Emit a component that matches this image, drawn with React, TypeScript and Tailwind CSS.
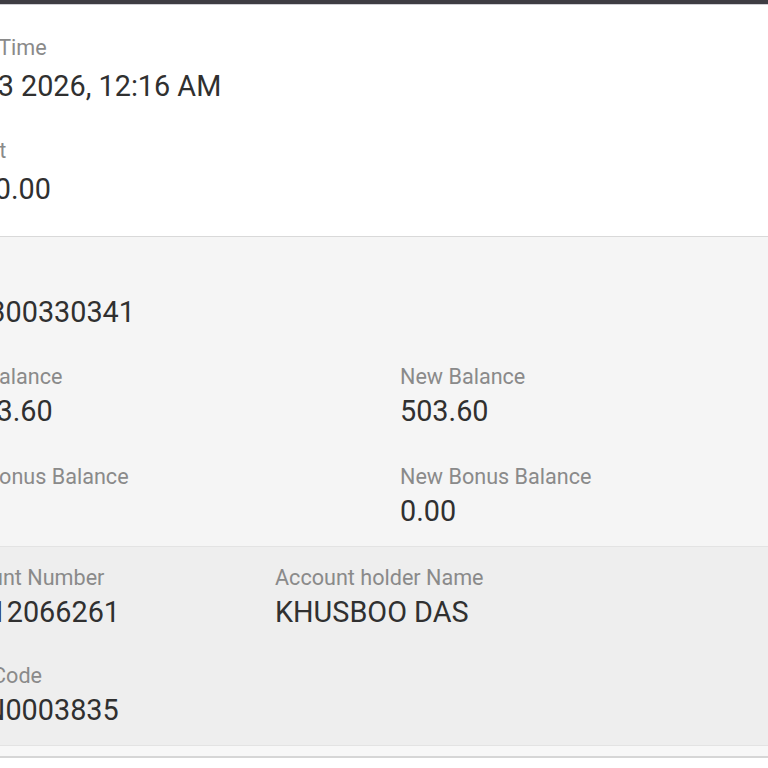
import React from "react";

const font = { fontFamily: "Roboto, 'Noto Sans', sans-serif" };

function Field1({ label, value }: { label: string; value: string }) {
  return (
    <div className="flex flex-col">
      <div className="text-[21.6px] leading-[28px] text-[#8a8a8a] whitespace-nowrap">{label}</div>
      <div className="mt-[6.6px] text-[28.8px] leading-[36px] text-[#303030] whitespace-nowrap">{value}</div>
    </div>
  );
}

function Field({ label, value }: { label: string; value: string }) {
  return (
    <div className="flex flex-col">
      <div className="text-[21.6px] leading-[28px] text-[#8a8a8a] whitespace-nowrap">{label}</div>
      <div className="mt-[2px] text-[28.8px] leading-[36px] text-[#303030] whitespace-nowrap">{value}</div>
    </div>
  );
}

export default function App() {
  return (
    <div className="w-[768px] h-[768px] overflow-hidden bg-white flex flex-col" style={font}>
      <div className="h-[4px] bg-[#3e3d43] border-b border-[#cfcfd4] box-content" />
      <section className="bg-white border-b border-[#d9d9d9] pt-[28.6px] pb-[28.4px]">
        <div className="-ml-[70px] flex flex-col gap-[32.4px]">
          <Field1 label="Date & Time" value="Oct 23 2026, 12:16 AM" />
          <Field1 label="Amount" value="10000.00" />
        </div>
      </section>
      <section className="bg-[#f5f5f5] border-b border-[#e3e3e3] pt-[27px] pb-[17.5px]">
        <div className="-ml-[52px] grid grid-cols-[452px_1fr] gap-y-[33.5px]">
          <Field label="UTR" value="M4300330341" />
          <div />
          <Field label="Old Balance" value="1503.60" />
          <Field label="New Balance" value="503.60" />
          <Field label="Old Bonus Balance" value="0" />
          <Field label="New Bonus Balance" value="0.00" />
        </div>
      </section>
      <section className="bg-[#eeeeee] border-b border-[#e3e3e3] pt-[16.6px] pb-[17.4px]">
        <div className="-ml-[58px] grid grid-cols-[333px_1fr] gap-y-[32px]">
          <Field label="Account Number" value="40312066261" />
          <Field label="Account holder Name" value="KHUSBOO DAS" />
          <Field label="IFSC Code" value="SBIN0003835" />
          <div />
        </div>
      </section>
      <div className="h-[10px] bg-[#f7f7f7] border-b-2 border-[#d6d6d6] box-content" />
      <div className="flex-1 bg-white" />
    </div>
  );
}
